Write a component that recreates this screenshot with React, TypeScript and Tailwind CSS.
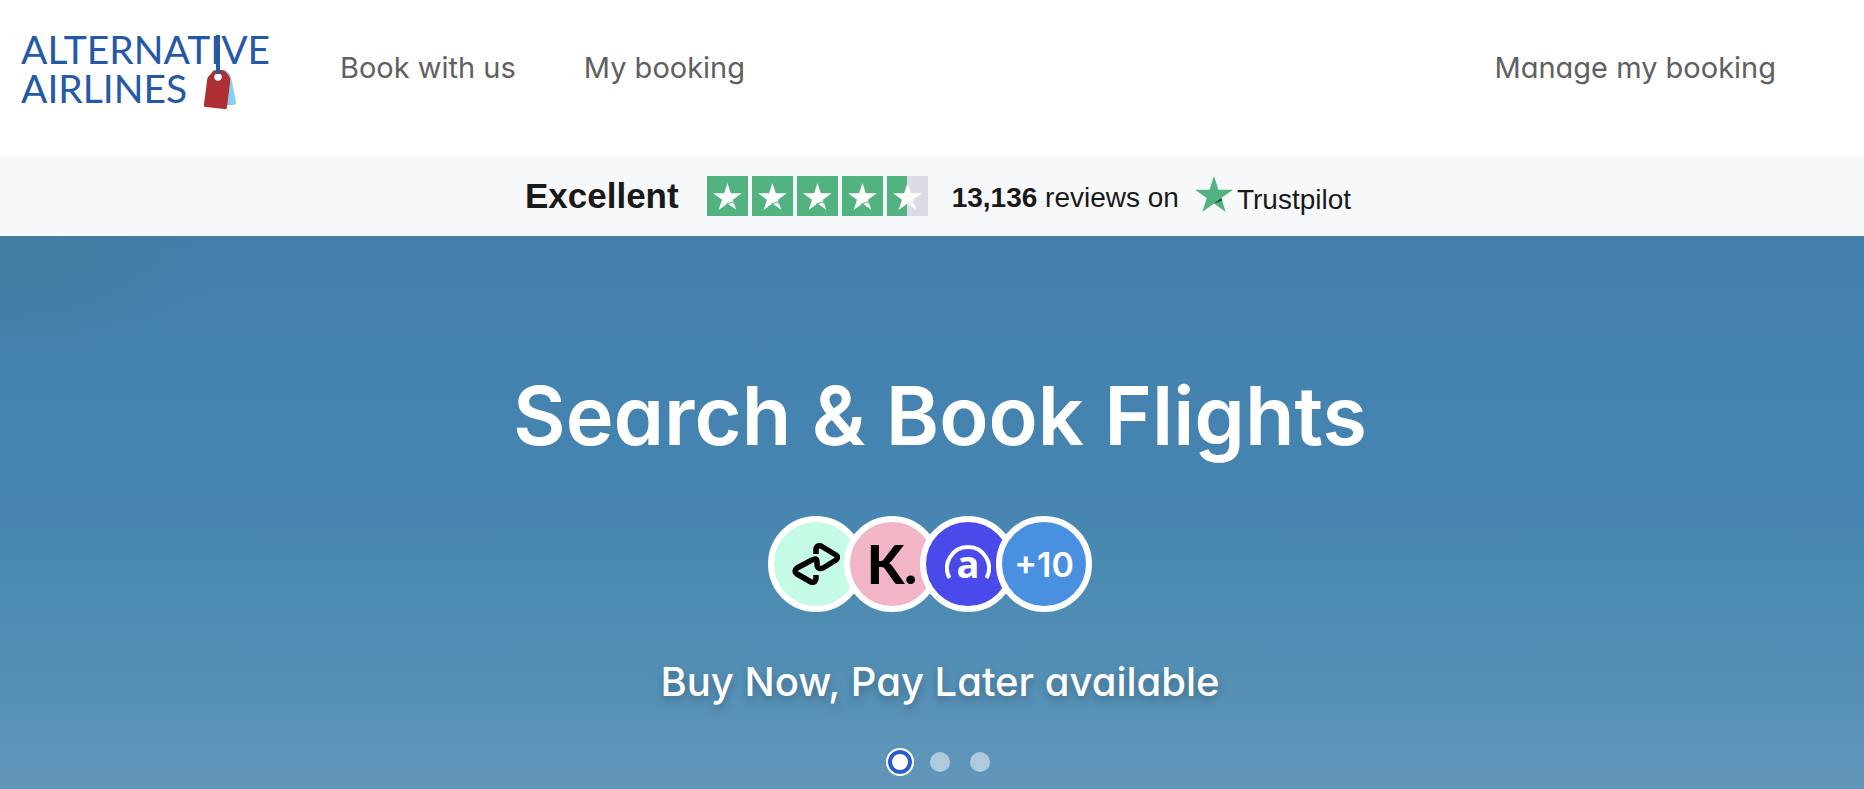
import type { ReactNode } from 'react'

const STAR = '20,0 24.7,14.4 40,14.4 27.7,23.3 32.4,38 20,28.9 7.6,38 12.3,23.3 0,14.4 15.3,14.4'

const slides = ['Buy Now, Pay Later', 'Payment methods', 'Airlines']

const Logo = () => (
    <svg viewBox="0 0 264 104" className="h-26 w-66" role="img" aria-label="Alternative Airlines">
        <g fill="#2459a6" fontFamily="Lato, sans-serif" fontSize="39">
            <text x="5" y="48">ALTERNATIVE</text>
            <text x="5" y="87">AIRLINES</text>
        </g>
        <path d="M203 54h4q6 1 8 7l5 25q0 3-3 3h-12z" fill="#8acff2" />
        <path d="M197 55q5-3 12 0l4 5q2 3 1 7l-3 24q0 3-3 2l-18-2q-3 0-2-3l3-23q0-4 3-6z" fill="#ae2f33" />
        <circle cx="202" cy="61" r="3.500" fill="#fff" stroke="#b5def5" />
        <path d="M202 19v39" stroke="#2459a6" strokeWidth="4" />
    </svg>
)

const RatingStar = ({ half = false }: { half?: boolean }) => (
    <svg viewBox="0 0 41 40" className="h-10 w-[41px]" aria-hidden="true">
        <rect width="41" height="40" fill={half ? '#dcdce6' : '#52b280'} />
        {half && <rect width="20" height="40" fill="#52b280" />}
        <path d="M20.5 7l3.3 10.200h11l-8.900 6.600 3.300 10-8.700-6.400-8.900 6.600 3.400-10.200-8.900-6.600h11z" fill="#fff" />
        <path d="M19.500 28l7-2.300.8 2.300" fill="none" stroke={half ? '#dcdce6' : '#52b280'} strokeWidth="1" />
    </svg>
)

const Badge = ({ color, children }: { color: string; children: ReactNode }) => (
    <li className={`-ml-5 flex size-24 items-center justify-center rounded-full border-6 border-white ${color}`}>
        {children}
    </li>
)

const App = () => {
    return (
        <div className="flex min-h-screen flex-col bg-white font-[Inter,sans-serif] [font-feature-settings:'cv11']">
            <header className="flex h-39 items-start pt-4 pr-22 pl-4">
                <a href="#" className="shrink-0">
                    <Logo />
                </a>
                <nav className="flex flex-1 items-center pt-8 pl-15 text-[29px] leading-10 text-[#606060]">
                    <a href="#book">Book with us</a>
                    <a href="#booking" className="ml-17">My booking</a>
                    <a href="#manage" className="ml-auto">Manage my booking</a>
                </nav>
            </header>

            <section className="flex h-20 items-center justify-center bg-[#f7f8fa] pl-3 font-['Liberation_Sans',sans-serif] text-[#191919]">
                <span className="text-[35px] leading-10 font-bold">Excellent</span>
                <div className="ml-7 flex gap-1" role="img" aria-label="4.5 out of 5 stars">
                    <RatingStar />
                    <RatingStar />
                    <RatingStar />
                    <RatingStar />
                    <RatingStar half />
                </div>
                <a href="#reviews" className="ml-6 flex items-center text-[28px] leading-10">
                    <span className="pt-1"><b>13,136</b> reviews on</span>
                    <svg viewBox="0 0 40 38" className="mb-1 ml-4 h-9 w-[38px]" aria-hidden="true">
                        <polygon points={STAR} fill="#52b280" />
                        <path d="M28.800 26l-1.100-2.700L20 28.900z" fill="#17533a" />
                    </svg>
                    <span className="ml-1 pt-2">Trustpilot</span>
                </a>
            </section>

            <main className="flex flex-1 flex-col items-center bg-[radial-gradient(ellipse_240px_130px_at_top_left,#417f9f,transparent),linear-gradient(to_bottom,#427fae,#4684b0_45%,#4c8bb2_65%,#5590b6_82%,#6397ba)] pt-33 pb-3 pl-4 text-white">
                <h1 className="text-[81px] leading-24 font-semibold">Search &amp; Book Flights</h1>
                <ul className="mt-13 flex">
                    <Badge color="bg-[#c5fae5]">
                        <svg viewBox="0 0 48 42" className="h-[42px] w-12" fill="none" stroke="#000" strokeWidth="5.500" strokeLinejoin="round" aria-hidden="true">
                            <path d="M24 11V7q0-5 5-4l15 9q3 2 0 5l-13 8q-6 2-6-4v-2q0-5-5-2L5 25q-4 3 0 6l14 8q5 1 5-4v-3" />
                        </svg>
                    </Badge>
                    <Badge color="bg-[#f1b5c6]">
                        <span className="font-[Lato,sans-serif] text-[54px] leading-none font-black text-black">K.</span>
                    </Badge>
                    <Badge color="bg-[#4a4aeb]">
                        <svg viewBox="0 0 46 60" className="h-15 w-[46px]" aria-hidden="true">
                            <path d="M4.500 44A21 21 0 1 1 41.500 44" fill="none" stroke="#fff" strokeWidth="4" />
                            <text x="23" y="44" textAnchor="middle" fill="#fff" fontFamily="Open Sans, sans-serif" fontSize="38" fontWeight="700">a</text>
                        </svg>
                    </Badge>
                    <Badge color="bg-[#4a90e1]">
                        <span className="text-[34px] font-semibold">+10</span>
                    </Badge>
                </ul>
                <p className="mt-10 text-[40px] leading-15 font-medium text-shadow-[0_4px_8px_rgb(0_0_0/0.25)]">
                    Buy Now, Pay Later available
                </p>
                <div className="mt-9 flex h-7 items-center gap-5">
                    {slides.map((slide, i) => (
                        <button
                            key={slide}
                            type="button"
                            aria-label={slide}
                            className={
                                i === 0
                                    ? 'size-5 rounded-full border-2 border-[#295ccc] bg-white ring-2 ring-[#295ccc] outline-2 outline-offset-2 outline-white'
                                    : 'size-5 rounded-full bg-white/50'
                            }
                        />
                    ))}
                </div>
            </main>
        </div>
    )
}

export default App
